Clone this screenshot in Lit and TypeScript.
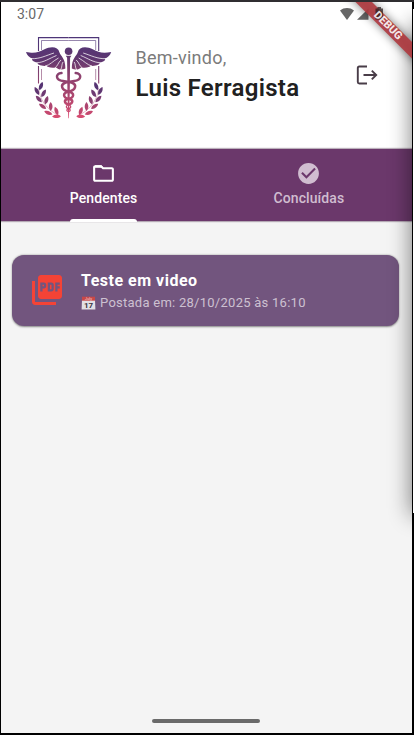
import { LitElement, html, css, svg } from "lit";
import { customElement } from "lit/decorators.js";

type Leaf = [number, number, number, string];
const LEAVES: Leaf[] = [
  [41, 86, 22, "#563473"], [36.8, 91, -28, "#5f3671"], [43.6, 93.3, 30, "#6e3a72"], [38.8, 99, -42, "#7d3d72"], [46.4, 100.3, 18, "#8c4070"],
  [42.6, 106.3, -55, "#a5436f"], [50.7, 106.5, 0, "#ae4570"], [48.3, 112.8, -68, "#c5486f"], [56.4, 111, -20, "#c0476f"], [56.5, 116.3, -92, "#d64b70"],
];

@customElement("brand-logo")
class BrandLogo extends LitElement {
  static styles = css`
    :host { display: block; width: 100px; height: 96px; }
    svg { display: block; }
  `;
  render() {
    const half = svg`
      <path d="M26 52 C35 54 39 52 44 49.5 C51 46 58 46.5 59.5 52.5 C60.5 56 65.5 58 65.4 68.5
        C62 70.5 58 69.5 56 67.5 C51 68.5 47 67 46.5 65.8 C41 66.3 37 64.5 37.5 62.8 C33 61.8 31 59.5 32.5 58.8 C29 57.5 27 55 26 52Z"/>
      <g fill="none" stroke="#fff" stroke-width="0.75">
        <path d="M31 58.7 C40 59 46 55.5 54 53"/>
        <path d="M36.5 62.8 C44 62.5 49 58.5 56.5 55.5"/>
        <path d="M45 66.2 C50 65 53 61 58.5 58"/>
        <path d="M54.5 68.3 C58 66 58 62.5 61 60"/>
        <path d="M60.5 70 C62.5 67 61.3 64.5 63 62"/>
      </g>
      <path d="M38.5 51 V37.6 H68.6 M38.5 66 V83.5" fill="none" stroke="url(#ink)" stroke-width="1.1"/>
      <path d="M41.5 50 V40.5 H68.6 M41.5 69 V80" fill="none" stroke="url(#ink)" stroke-width=".6"/>
      <path d="M38.8 88 C39 98 46 110 60 116" fill="none" stroke="url(#ink)" stroke-width=".4"/>
      ${LEAVES.map(([x, y, a, c]) => svg`<path fill=${c} transform="translate(${x} ${y}) rotate(${a})" d="M0 4.4 C-2.7 1.5 -2.1 -2 0 -4.4 C2.1 -2 2.7 1.5 0 4.4Z"/>`)}
    `;
    return html`<svg width="100" height="96" viewBox="20 30 100 96">
      <defs><linearGradient id="ink" gradientUnits="userSpaceOnUse" x1="50" y1="38" x2="62" y2="118">
        <stop offset="0" stop-color="#4d3578"/><stop offset=".25" stop-color="#5f3670"/>
        <stop offset=".42" stop-color="#83406f"/><stop offset=".7" stop-color="#a5466f"/><stop offset="1" stop-color="#d94a70"/>
      </linearGradient></defs>
      <g fill="url(#ink)">${half}<g transform="translate(137.2 0) scale(-1 1)">${half}</g>
        <circle cx="68.6" cy="51.3" r="3.8"/>
        <path d="M65.8 55.8 h5.6 l-1.3 2 -.3 34 -.9 26.500 h-.6 l-.9 -26.500 -.3 -34z"/>
      </g>
      <g fill="none" stroke="url(#ink)" stroke-linecap="round">
        <path stroke-width="2.5" d="M61.500 73 C55 73.500 55.500 80 63 81 L71.500 82.500 C78 85 75 90.500 69 91.500 C62 93 63 97.500 68.6 98.8 C74 100 73 103.5 68.6 104.5"/>
        <path stroke-width="2.5" d="M75.700 73 C82.200 73.500 81.700 80 74.200 81 L65.700 82.500 C59.200 85 62.200 90.500 68.200 91.500 C75.200 93 74.200 97.500 68.6 98.8 C63.200 100 64.200 103.5 68.6 104.5"/>
        <path stroke-width="1.3" d="M68.6 104.5 C65 106 66 108 68.6 108.7 C71 109.5 70.5 111 68.6 111.5 M68.6 104.5 C72 106 71 108 68.6 108.7 C66 109.5 66.5 111 68.6 111.5"/>
      </g>
    </svg>`;
  }
}

@customElement("tab-item")
class TabItem extends LitElement {
  static properties = { label: {}, active: { type: Boolean, reflect: true } };
  declare label: string;
  declare active: boolean;
  static styles = css`
    :host { flex: 1; display: flex; flex-direction: column; align-items: center; color: #d0bdd0; height: 73px; }
    :host([active]) { color: #fff; }
    svg { display: block; margin-top: 12px; fill: currentColor; }
    .label { font: 500 14px/20px Roboto, sans-serif; letter-spacing: .1px; margin-top: 2px; }
    .bar { width: 67px; height: 3px; border-radius: 3px 3px 0 0; margin-top: auto; }
    :host([active]) .bar { background: #fff; }
  `;
  render() {
    const icon = this.active
      ? "M9.17 6l2 2H20v10H4V6h5.17M10 4H4c-1.1 0-1.99.9-1.99 2L2 18c0 1.1.9 2 2 2h16c1.1 0 2-.9 2-2V8c0-1.1-.9-2-2-2h-8l-2-2z"
      : "M12 2C6.48 2 2 6.48 2 12s4.48 10 10 10 10-4.48 10-10S17.52 2 12 2zm-2 15l-5-5 1.41-1.41L10 14.17l7.59-7.59L19 8l-9 9z";
    return html`<svg width="25" height="25" viewBox="0 0 24 24">
        <path d=${icon}></path>${this.active ? svg`<path d="M4 4h6l2 2.500H3z"/>` : ""}
      </svg>
      <span class="label">${this.label}</span><span class="bar"></span>`;
  }
}

@customElement("post-card")
class PostCard extends LitElement {
  static styles = css`
    :host { display: flex; align-items: center; height: 71.5px; box-sizing: border-box; padding-left: 17px;
      border-radius: 12px; background: #72557e; box-shadow: 0 0.5px 2px rgba(0,0,0,.45); font-family: Roboto, sans-serif; }
    svg { display: block; flex: none; }
    .text { margin-left: 16px; padding-top: 2px; }
    .title { font-size: 16px; font-weight: 700; line-height: 22px; letter-spacing: .5px; color: #fff; }
    .meta { display: flex; align-items: center; gap: 4px; font-size: 13px; line-height: 20px; letter-spacing: .26px; color: #cdc1d1; margin-top: 1px; }
  `;
  render() {
    return html`
      <svg width="36" height="36" viewBox="0 0 24 24" fill="#f44336"><path d="M20 2H8c-1.1 0-2 .9-2 2v12c0 1.1.9 2 2 2h12c1.1 0 2-.9 2-2V4c0-1.1-.9-2-2-2zm-8.500 7.500c0 .83-.67 1.500-1.500 1.500H9v2H7.500V7H10c.83 0 1.500.67 1.500 1.500v1zm5 2c0 .83-.67 1.500-1.500 1.500h-2.500V7H15c.83 0 1.500.67 1.500 1.500v3zm4-3H19v1h1.500V11H19v2h-1.500V7h3v1.500zM9 9.500h1v-1H9v1zM4 6H2v14c0 1.100.9 2 2 2h14v-2H4V6zm10 5.500h1v-3h-1v3z"></path></svg>
      <div class="text">
        <div class="title">Teste em video</div>
        <div class="meta">
          <svg width="15" height="14" viewBox="0 0 15 14">
            <path d="M1 4h13l.4 9.500H.6z" fill="#e3e0e4"></path>
            <path d="M1 .7h13v4H1z" fill="#c94848"></path>
            <text x="7.500" y="3.900" text-anchor="middle" font-family="Roboto, sans-serif" font-size="3.800" letter-spacing="0" fill="#f5d7d7">July</text>
            <text x="7.500" y="12.200" text-anchor="middle" font-family="Roboto, sans-serif" font-weight="700" font-size="8" letter-spacing="0" fill="#3c3540">17</text>
          </svg>
          <span>Postada em: 28/10/2025 às 16:10</span>
        </div>
      </div>`;
  }
}

@customElement("app-root")
class AppRoot extends LitElement {
  static styles = css`
    :host { display: block; position: relative; box-sizing: border-box; width: 414px; height: 735px;
      padding: 2px 2px 2px 1px; background: #000; overflow: hidden; font-family: Roboto, sans-serif; }
    .topline { position: absolute; inset: 0 0 auto 0; height: 2px; background: #302e31; }
    .sliver { position: absolute; right: 0; top: 9px; width: 1px; height: 504px; background: #fff; }
    .screen { position: relative; display: flex; flex-direction: column; height: 731px; background: #f4f4f4; overflow: hidden; }
    .head { height: 147px; background: #fff; box-sizing: border-box; display: flex; flex-direction: column; }
    .status { height: 24px; padding: 0 28px 0 16px; display: flex; align-items: center; justify-content: space-between; font-size: 14px; color: #686868; }
    .status svg { display: block; }
    .user { display: flex; align-items: center; padding: 4px 34px 0 19px; }
    .hello { flex: 1; margin-left: 15.5px; margin-top: -7px; }
    .small { font-size: 18px; line-height: 26px; letter-spacing: .25px; color: #7b7b7b; }
    .name { font-size: 24px; line-height: 34px; font-weight: 600; letter-spacing: .3px; color: #212121; }
    .exit { display: block; margin-top: -7px; }
    .tabs { display: flex; height: 72px; padding-right: .5px; background: #6b386b; box-shadow: 0 0 1px 1px rgba(60,30,60,.35); z-index: 1; }
    .list { flex: 1; padding: 33.5px 13px 0 11px; }
    .home { align-self: center; width: 108px; height: 4px; border-radius: 2px; background: #6a6a6a; margin: 0 2px 10px 0; }
    .edge { position: absolute; z-index: 2; left: 411px; top: 22px; width: 30px; height: 490px; box-shadow: 0 0 22px 1px rgba(0,0,0,.48); }
    .ribbon { position: absolute; z-index: 3; top: 0; right: 0; }
  `;
  render() {
    return html`
      <div class="topline"></div><div class="sliver"></div>
      <div class="screen">
        <div class="head">
          <div class="status"><span>3:07</span>
            <svg width="46" height="16" viewBox="338 5 46 16" fill="#666">
              <path d="M340 9.500 C344 6.200 350 6.200 354 9.500 L347 19z"></path>
              <path d="M368.500 7.500 V18.800 H357z"></path>
            </svg>
          </div>
          <div class="user">
            <brand-logo></brand-logo>
            <div class="hello"><div class="small">Bem-vindo,</div><div class="name">Luis Ferragista</div></div>
            <svg class="exit" width="22" height="20" viewBox="0 0 22 20" fill="none" stroke="#493d48" stroke-width="1.900">
              <path d="M11 1.500H3.300Q1.800 1.500 1.800 3V17Q1.800 18.500 3.300 18.500H11M7.500 10H20M15.800 5.600L20.200 10L15.800 14.400"></path>
            </svg>
          </div>
        </div>
        <div class="tabs"><tab-item label="Pendentes" active></tab-item><tab-item label="Concluídas"></tab-item></div>
        <div class="list"><post-card></post-card></div>
        <div class="home"></div>
        <div class="edge"></div>
        <svg class="ribbon" width="80" height="80" viewBox="332 2 80 80">
          <defs>
            <filter id="soft" x="-50%" y="-50%" width="200%" height="200%"><feGaussianBlur stdDeviation="5"></feGaussianBlur></filter>
          </defs>
          <path d="M345.500 -8 L362 -8 L422 52 L422 68.500Z" fill="#000" opacity=".5" filter="url(#soft)"></path>
          <path d="M345.500 -8 L362 -8 L422 52 L422 68.500Z" fill="#b03a3f" fill-opacity=".9"></path>
          <path d="M375.500 8.500 h2 v-1.500 h3.500 v1.500 h2 v11 h-7.500z" fill="#2a1c1e" fill-opacity=".75"></path>
          <text transform="translate(388.500 25) rotate(45)" x="0" y="4" text-anchor="middle" font-family="Roboto, sans-serif" font-weight="800" font-size="11" fill="#fff" fill-opacity=".88">DEBUG</text>
        </svg>
      </div>`;
  }
}
